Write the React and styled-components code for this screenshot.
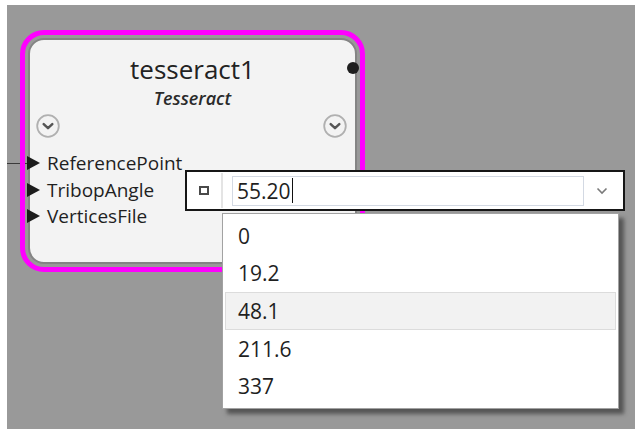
import React from 'react';
import styled, { createGlobalStyle } from 'styled-components';

const GlobalStyle = createGlobalStyle`
  html, body { margin: 0; padding: 0; background: #fff; }
  body { font-family: 'Open Sans', 'Noto Sans', sans-serif; color: #1f1f1f; }
  * { box-sizing: border-box; }
`;

const ports = ['ReferencePoint', 'TribopAngle', 'VerticesFile'];
const options = ['0', '19.2', '48.1', '211.6', '337'];

// small round expander button on the node header
const ExpandIcon = () => (
  <svg width="24" height="24" viewBox="0 0 24 24">
    <circle cx="12" cy="12" r="10.8" fill="none" stroke="#b0b0b0" strokeWidth="1.8" />
    <path d="M7.7 10.2 L12 14.2 L16.3 10.2" fill="none" stroke="#555" strokeWidth="2.5" strokeLinecap="round" strokeLinejoin="round" />
  </svg>
);

const Chevron = () => (
  <svg width="12" height="8" viewBox="0 0 12 8">
    <path d="M1.5 1.5 L6 6 L10.5 1.5" fill="none" stroke="#7a7a7a" strokeWidth="1.6" />
  </svg>
);

export default function App() {
  return (
    <>
      <GlobalStyle />
      <Screen>
        <Canvas>
          <Wire />
          <SelectionRing>
            <Node>
              <Title>tesseract1</Title>
              <TypeName>Tesseract</TypeName>
              <ExpandRow>
                <ExpandIcon />
                <ExpandIcon />
              </ExpandRow>
              <PortList>
                {ports.map((p) => (
                  <Port key={p}>
                    <PortArrow />
                    {p}
                  </Port>
                ))}
              </PortList>
              <OutputDot />
            </Node>
          </SelectionRing>

          <Editor>
            <PinBox>
              <Pin />
            </PinBox>
            <ValueField>
              55.20<Caret />
            </ValueField>
            <DropButton>
              <Chevron />
            </DropButton>
          </Editor>

          <Listbox>
            {options.map((o) => (
              <Option key={o} $hover={o === '48.1'}>{o}</Option>
            ))}
          </Listbox>
        </Canvas>
      </Screen>
    </>
  );
}

const Screen = styled.div`
  width: 635px;
  height: 429px;
  padding: 5px 0 0 7px;
  overflow: hidden;
`;

const Canvas = styled.div`
  position: relative;
  width: 100%;
  height: 100%;
  background: #999999;
  overflow: hidden;
`;

const Wire = styled.div`
  position: absolute;
  left: 0;
  top: 158px;
  width: 22px;
  height: 1px;
  background: #3a3a3a;
`;

const SelectionRing = styled.div`
  position: absolute;
  left: 13px;
  top: 25px;
  width: 345px;
  height: 242px;
  border: 5px solid #ff00ff;
  border-radius: 24px;
  padding: 3px;
`;

const Node = styled.div`
  position: relative;
  height: 100%;
  background: #f3f3f3;
  border: 2px solid #848484;
  border-radius: 16px;
  padding-top: 13px;
  display: flex;
  flex-direction: column;
`;

const Title = styled.div`
  text-align: center;
  font-size: 26px;
  line-height: 32px;
  color: #222;
`;

const TypeName = styled.div`
  text-align: center;
  font-size: 18px;
  line-height: 22px;
  font-style: italic;
  font-weight: 600;
  color: #2a2a2a;
  margin-top: 2px;
`;

const ExpandRow = styled.div`
  display: flex;
  justify-content: space-between;
  padding: 0 8px 0 6px;
  margin-top: 5px;
  svg { display: block; }
`;

const PortList = styled.div`
  display: flex;
  flex-direction: column;
  margin: 12px 0 0 -3px;
`;

const Port = styled.div`
  display: flex;
  align-items: center;
  gap: 7px;
  height: 26.5px;
  font-size: 19px;
  color: #1f1f1f;
`;

const PortArrow = styled.span`
  width: 0;
  height: 0;
  border-top: 7px solid transparent;
  border-bottom: 7px solid transparent;
  border-left: 13px solid #1c1c1c;
`;

const OutputDot = styled.span`
  position: absolute;
  right: -4px;
  top: 22px;
  width: 12px;
  height: 12px;
  border-radius: 50%;
  background: #1e1e1e;
`;

const Editor = styled.div`
  position: absolute;
  left: 178px;
  top: 165px;
  width: 440px;
  height: 41px;
  background: #fff;
  border: 2px solid #161616;
  display: flex;
  align-items: center;
`;

const PinBox = styled.div`
  width: 36px;
  align-self: stretch;
  margin: 1px 0;
  display: flex;
  align-items: center;
  justify-content: center;
  border-right: 2px solid #e4e4e4;
`;

const Pin = styled.span`
  width: 10px;
  height: 9px;
  border: 2px solid #4a4a4a;
  background: #fff;
`;

const ValueField = styled.div`
  margin-left: 9px;
  width: 352px;
  height: 30px;
  border: 1px solid #d3d9e3;
  display: flex;
  align-items: center;
  padding-left: 4px;
  font-size: 21px;
  color: #1f1f1f;
`;

const Caret = styled.span`
  width: 1.5px;
  height: 25px;
  margin-left: 1px;
  background: #111;
`;

const DropButton = styled.div`
  flex: 1;
  display: flex;
  align-items: center;
  justify-content: center;
  padding-right: 3px;
  svg { display: block; }
`;

const Listbox = styled.div`
  position: absolute;
  left: 215px;
  top: 208px;
  width: 397px;
  height: 196px;
  background: #fff;
  border: 1px solid #a2a2a2;
  box-shadow: 5px 5px 4px rgba(40, 40, 40, 0.6);
  padding: 3px 2px;
  display: flex;
  flex-direction: column;
`;

const Option = styled.div`
  height: 38px;
  display: flex;
  align-items: center;
  padding-left: 12px;
  font-size: 21px;
  color: #1f1f1f;
  background: ${(p) => (p.$hover ? '#f2f2f2' : 'transparent')};
  border: 1px solid ${(p) => (p.$hover ? '#dcdcdc' : 'transparent')};
`;
